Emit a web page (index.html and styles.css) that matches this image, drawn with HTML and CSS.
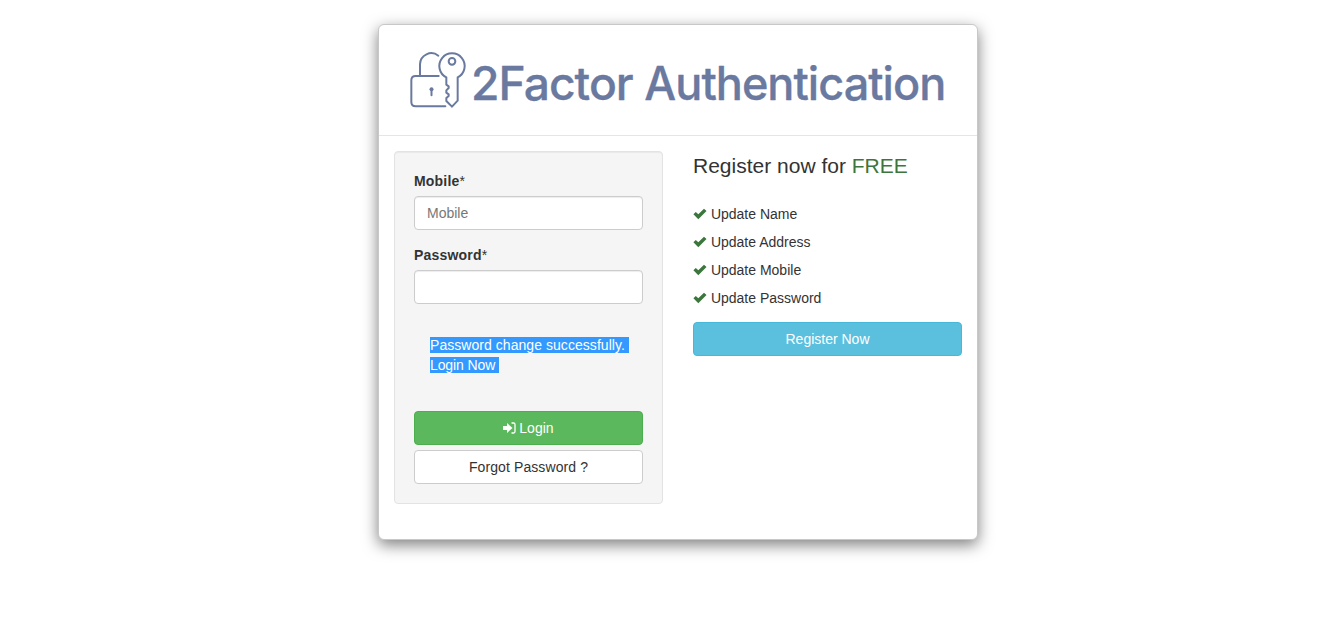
FILE: index.html
```html
<!DOCTYPE html>
<html lang="en">
<head>
<meta charset="utf-8">
<title>2Factor Authentication</title>
<link rel="stylesheet" href="styles.css">
</head>
<body>
<main class="modal">
  <header class="modal-header">
    <svg class="logo" viewBox="72 75 1704 240" role="img" aria-label="2Factor Authentication">
      <g class="logo-lines">
        <path d="M206 183H137q-13 0-13 13v65q0 13 13 13h89"/>
        <path d="M150 183V148A34 34 0 0 1 205 122"/>
        <path d="M229 187A38 38 0 1 1 263 187V257L246 275L229 258V249L236 243V238L229 233V226L236 219V214L229 209Z"/>
        <circle cx="246" cy="139" r="10"/>
        <path d="M184.500 224v17"/>
      </g>
      <circle class="logo-fill" cx="184.500" cy="223" r="6"/>
      <text class="logo-text" x="303" y="255" textLength="485" lengthAdjust="spacingAndGlyphs">2Factor</text>
      <text class="logo-text" x="823" y="255" textLength="903" lengthAdjust="spacingAndGlyphs">Authentication</text>
    </svg>
  </header>
  <div class="modal-body">
    <form class="well">
      <div class="form-group">
        <label for="mobile">Mobile<span class="required">*</span></label>
        <input class="form-control" id="mobile" type="text" placeholder="Mobile">
      </div>
      <div class="form-group">
        <label for="password">Password<span class="required">*</span></label>
        <input class="form-control" id="password" type="password">
      </div>
      <div class="message">
        <div><span class="selected wide">Password change successfully. </span></div>
        <div><span class="selected">Login Now </span></div>
      </div>
      <button class="btn btn-success" type="button"><svg class="icon-login" viewBox="0 0 13 12"><path d="M0 4h4V1l5.500 5L4 11V8H0z" fill="#fff"/><path d="M8.500 1h2Q12 1 12 2.500v7Q12 11 10.500 11h-2" fill="none" stroke="#fff" stroke-width="1.300"/></svg> Login</button>
      <button class="btn btn-default" type="button">Forgot Password ?</button>
    </form>
    <section>
      <p class="lead">Register now for <span class="text-success">FREE</span></p>
      <ul class="features">
        <li><svg class="icon-check" viewBox="0 0 14 12"><path d="M.4 6.200L2.800 3.900 5.300 6.300 11 .7 13.500 3.100 5.300 11.200z"/></svg> Update Name</li>
        <li><svg class="icon-check" viewBox="0 0 14 12"><path d="M.4 6.200L2.800 3.900 5.300 6.300 11 .7 13.500 3.100 5.300 11.200z"/></svg> Update Address</li>
        <li><svg class="icon-check" viewBox="0 0 14 12"><path d="M.4 6.200L2.800 3.900 5.300 6.300 11 .7 13.500 3.100 5.300 11.200z"/></svg> Update Mobile</li>
        <li><svg class="icon-check" viewBox="0 0 14 12"><path d="M.4 6.200L2.800 3.900 5.300 6.300 11 .7 13.500 3.100 5.300 11.200z"/></svg> Update Password</li>
      </ul>
      <button class="btn btn-info" type="button">Register Now</button>
    </section>
  </div>
</main>
</body>
</html>
```
FILE: styles.css
```css
* { box-sizing: border-box; }
body {
  margin: 0;
  min-height: 619px;
  padding: 24px 0 0 378px;
  background: #fff;
  color: #333;
  font: 14px/20px "Liberation Sans", Arial, sans-serif;
}
.modal {
  width: 600px;
  border: 1px solid #c8c8c8;
  border-radius: 6px;
  background: #fff;
  box-shadow: 0 5px 15px rgba(0, 0, 0, .5);
}
.modal-header {
  padding: 15px;
  border-bottom: 1px solid #e5e5e5;
}
.logo { display: block; width: 568px; height: 80px; overflow: visible; }
.logo-lines {
  fill: none;
  stroke: #6a799f;
  stroke-width: 6;
  stroke-linecap: round;
  stroke-linejoin: round;
}
.logo-fill, .logo-text { fill: #6a799f; }
.logo-text {
  font: 500 139px Inter, sans-serif;
  letter-spacing: -3px;
  stroke: #6a799f;
  stroke-width: 1;
  stroke-linejoin: round;
}
.modal-body {
  display: grid;
  grid-template-columns: 1fr 1fr;
  gap: 30px;
  padding: 15px;
}
.well {
  margin-bottom: 20px;
  padding: 19px;
  border: 1px solid #e3e3e3;
  border-radius: 4px;
  background: #f5f5f5;
  box-shadow: inset 0 1px 1px rgba(0, 0, 0, .05);
}
.form-group { margin-bottom: 15px; }
label { display: block; margin-bottom: 5px; font-weight: bold; letter-spacing: .2px; }
.required { font-weight: normal; }
.form-control {
  display: block;
  width: 100%;
  height: 34px;
  padding: 6px 12px;
  border: 1px solid #ccc;
  border-radius: 4px;
  background: #fff;
  box-shadow: inset 0 1px 1px rgba(0, 0, 0, .075);
  font: inherit;
}
.form-control::placeholder { color: #777; opacity: 1; }
.message { margin-bottom: 20px; padding: 16px 0 16px 16px; }
.message > div { height: 20px; }
.selected { white-space: pre; background: #39f; color: #fff; letter-spacing: -.1px; }
.selected.wide { letter-spacing: .05px; }
.btn {
  display: block;
  width: 100%;
  height: 34px;
  padding: 6px 12px;
  border: 1px solid;
  border-radius: 4px;
  font: inherit;
  text-align: center;
}
.btn + .btn { margin-top: 5px; }
.btn-success { border-color: #4cae4c; background: #5cb85c; color: #fff; }
.btn-default { border-color: #ccc; background: #fff; color: #333; letter-spacing: .1px; }
.btn-info { border-color: #46b8da; background: #5bc0de; color: #fff; }
.icon-login { width: 13px; height: 12px; margin-right: -1px; vertical-align: -1px; }
.lead { margin: 0 0 20px; font-size: 21px; line-height: 29.4px; }
.text-success { color: #3c763d; }
.features { margin: 0 0 10px; padding: 0; list-style: none; line-height: 28px; }
.icon-check { width: 14px; height: 12px; vertical-align: -1px; fill: #3c763d; }
```
